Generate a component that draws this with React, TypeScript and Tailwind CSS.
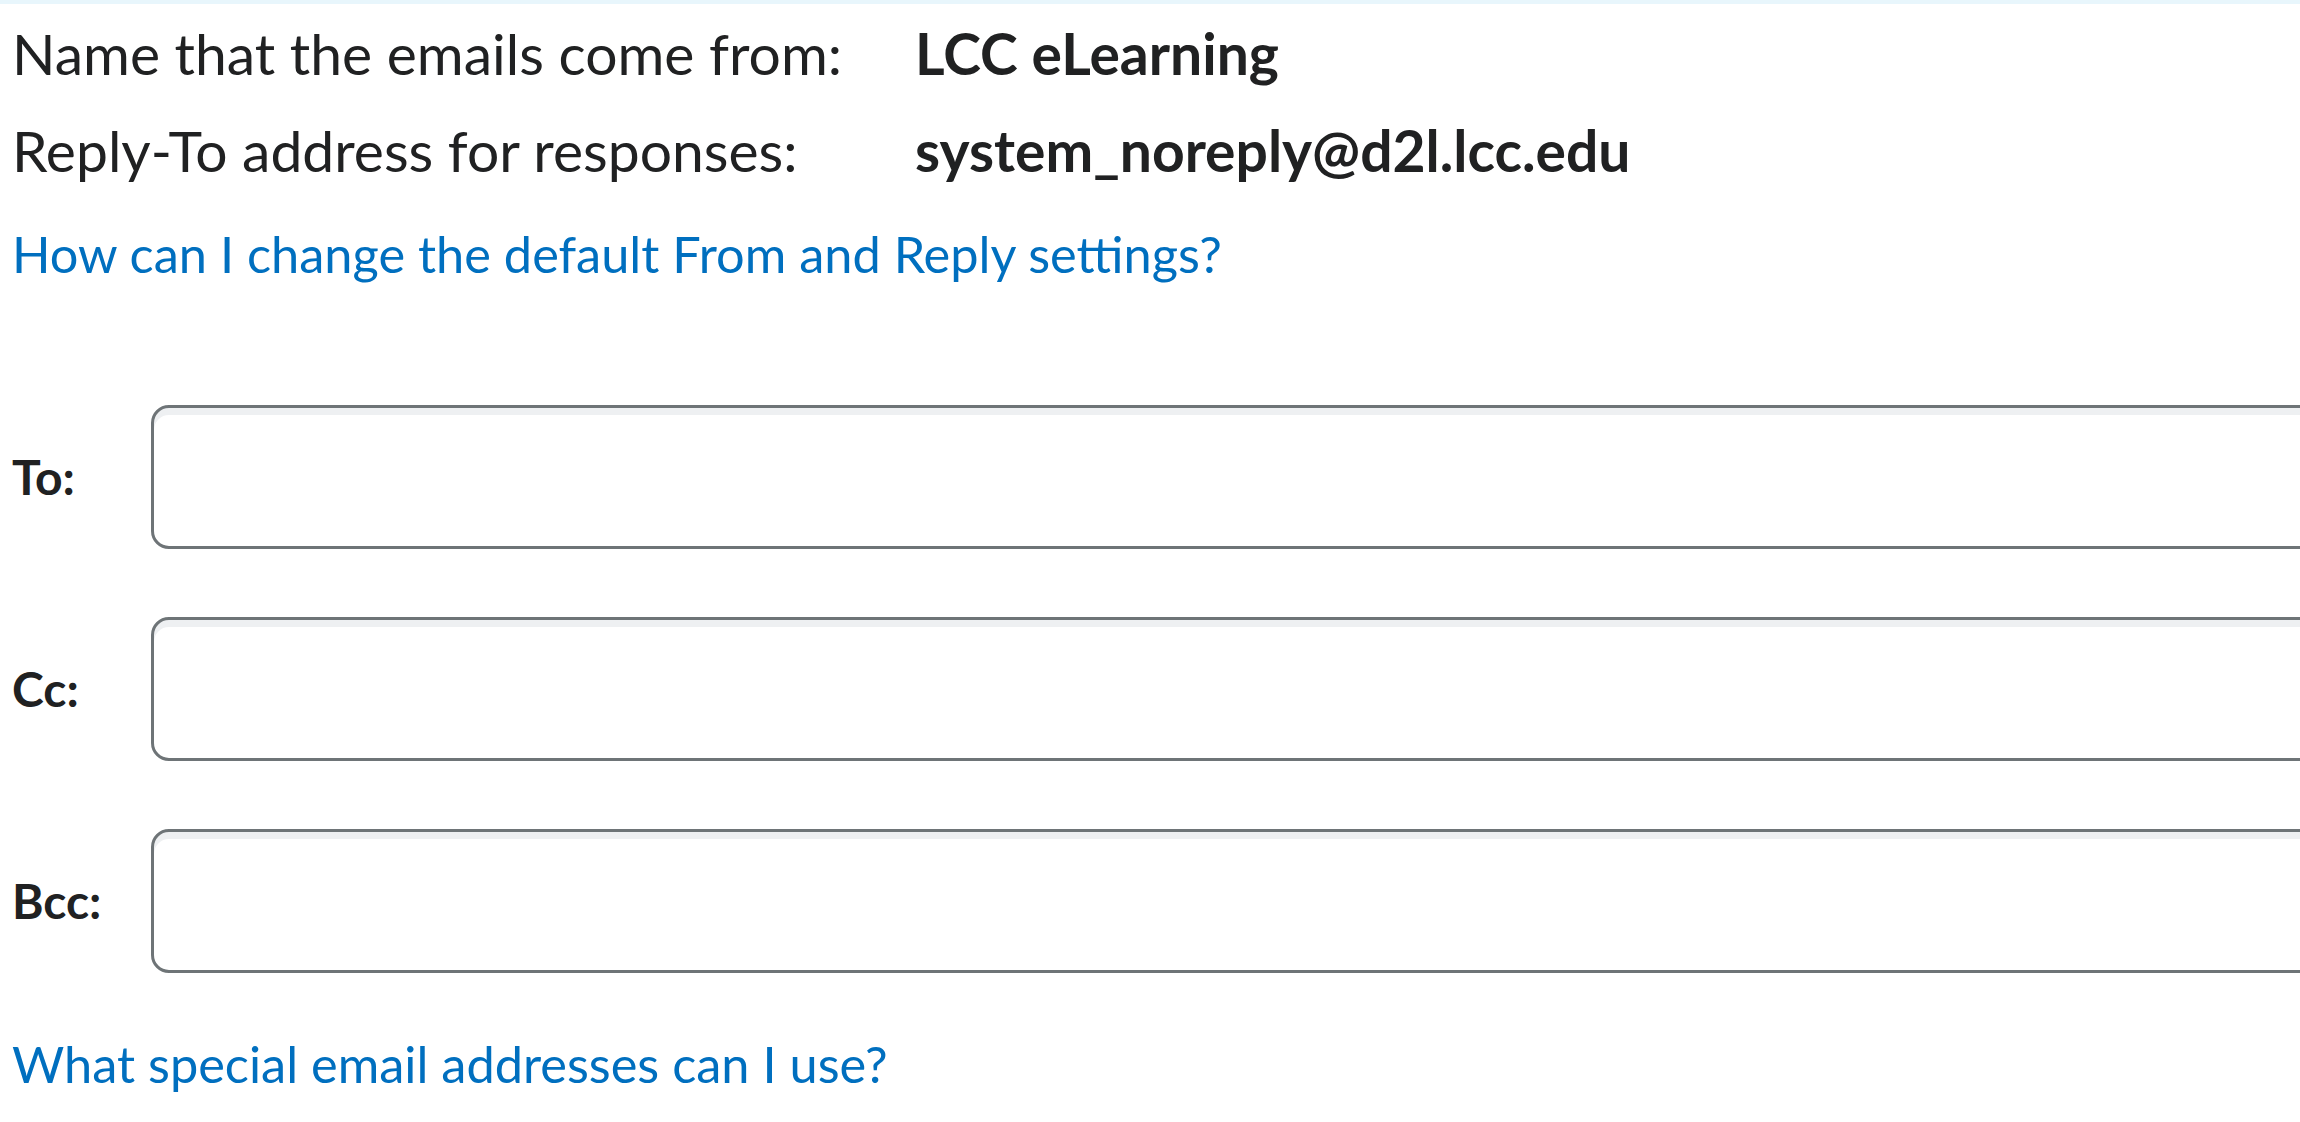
// Email settings form (D2L style)
const fields = ["To:", "Cc:", "Bcc:"];

const InfoRow = ({ label, value }: { label: string; value: string }) => (
  <div className="flex h-[97px] items-center leading-[97px]">
    <span className="w-[903px] shrink-0">{label}</span>
    <span className="font-bold">{value}</span>
  </div>
);

const App = () => {
  return (
    <div
      className="min-h-screen w-full overflow-hidden bg-white text-[#202122]"
      style={{ fontFamily: "Lato, 'Open Sans', sans-serif" }}
    >
      <div className="h-[4px] bg-[#e8f6fc]" />
      <div className="pl-[12px] text-[57px]">
        <div className="pt-[1px]">
          <InfoRow label="Name that the emails come from:" value="LCC eLearning" />
          <InfoRow
            label="Reply-To address for responses:"
            value="system_noreply@d2l.lcc.edu"
          />
        </div>
        <a className="mt-[6px] block h-[97px] text-[50.5px] leading-[97px] text-[#006fbf]">
          How can I change the default From and Reply settings?
        </a>

        <div className="mt-[103px] flex flex-col gap-[68px]">
          {fields.map((f) => (
            <div key={f} className="flex items-center">
              <label className="w-[139px] shrink-0 text-[48px] font-bold">{f}</label>
              <div className="h-[144px] w-[2300px] shrink-0 rounded-[18px] border-[3px] border-[#6e7477] bg-white shadow-[inset_0_7px_0_0_#eef0f2]" />
            </div>
          ))}
        </div>

        <a className="mt-[42px] block h-[97px] text-[50.5px] leading-[97px] text-[#006fbf]">
          What special email addresses can I use?
        </a>
      </div>
    </div>
  );
};

export default App;
